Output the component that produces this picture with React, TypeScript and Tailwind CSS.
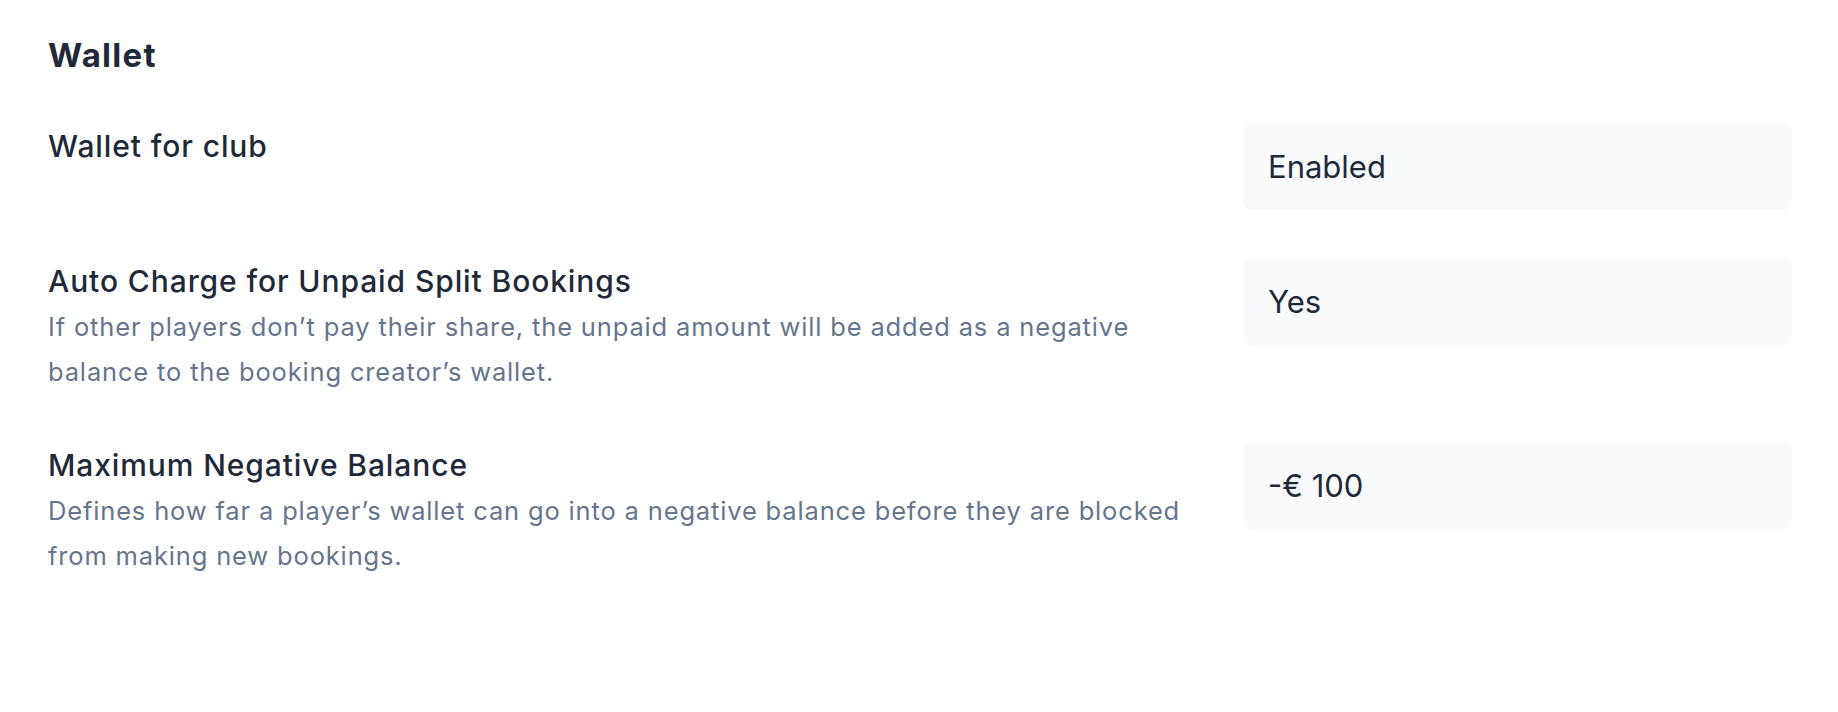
import React from "react";

type Row = { label: string; desc?: string[]; value: string };

const rows: Row[] = [
  { label: "Wallet for club", value: "Enabled" },
  {
    label: "Auto Charge for Unpaid Split Bookings",
    desc: [
      "If other players don’t pay their share, the unpaid amount will be added as a negative",
      "balance to the booking creator’s wallet.",
    ],
    value: "Yes",
  },
  {
    label: "Maximum Negative Balance",
    desc: [
      "Defines how far a player’s wallet can go into a negative balance before they are blocked",
      "from making new bookings.",
    ],
    value: "-€ 100",
  },
];

export default function App() {
  return (
    <div className="min-h-screen bg-white pl-[48px] pr-[46px] pt-[30px] font-[family-name:Inter,sans-serif] antialiased">
      <h2 className="text-[33px] leading-[50px] font-bold tracking-[1.3px] text-[#1f2937]">Wallet</h2>
      <div className="mt-[43px] flex flex-col gap-[48px]">
        {rows.map((r) => (
          <div key={r.label} className="flex items-start justify-between gap-[64px]">
            <div className="min-w-0 flex-1">
              <div className="text-[30px] leading-[47px] font-medium tracking-[0.9px] text-[#1f2937]">{r.label}</div>
              {r.desc && (
                <div className="text-[25.5px] leading-[44.5px] tracking-[0.84px] text-[#667589]">
                  {r.desc.map((l, i) => (
                    <div key={i} className="whitespace-nowrap">{l}</div>
                  ))}
                </div>
              )}
            </div>
            <div className="w-[549px] shrink-0 rounded-[8px] bg-[#f8fafc] px-[25px] py-[20px] text-[31px] leading-[47px] text-[#1f2937]">
              {r.value}
            </div>
          </div>
        ))}
      </div>
    </div>
  );
}
